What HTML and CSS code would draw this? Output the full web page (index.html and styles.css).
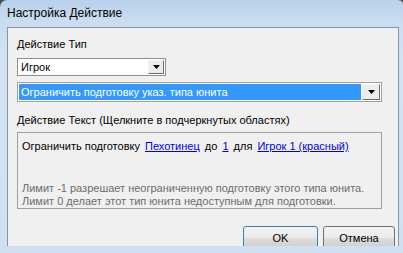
FILE: index.html
```html
<!DOCTYPE html>
<html lang="ru">

<head>
    <meta charset="UTF-8">
    <title>Настройка Действие</title>
    <link rel="stylesheet" href="styles.css">
</head>

<body>
    <div class="window">
        <div class="titlebar">Настройка Действие</div>
        <div class="client">
            <div class="label">Действие Тип</div>
            <div class="combo combo-short">
                <span class="combo-value">Игрок</span>
                <span class="combo-btn"><svg width="7" height="4"><polygon points="0,0 7,0 3.5,4" fill="#000"/></svg></span>
            </div>
            <div class="combo combo-wide">
                <span class="combo-value selected">Ограничить подготовку указ. типа юнита</span>
                <span class="combo-btn"><svg width="7" height="4"><polygon points="0,0 7,0 3.5,4" fill="#000"/></svg></span>
            </div>

            <div class="label label-text">Действие Текст (Щелкните в подчеркнутых областях)</div>
            <div class="textbox">
                <div class="trigger">Ограничить подготовку <a href="#">Пехотинец</a> до <a href="#">1</a> для <a href="#">Игрок 1 (красный)</a></div>
                <div class="hint">
                    Лимит -1 разрешает неограниченную подготовку этого типа юнита.<br>
                    Лимит 0 делает этот тип юнита недоступным для подготовки.
                </div>
            </div>

            <div class="buttons">
                <button class="btn btn-default">OK</button>
                <button class="btn btn-cancel">Отмена</button>
            </div>
        </div>
    </div>
</body>

</html>
```

FILE: styles.css
```css
body {
    margin: 0;
    background-color: #4b4e53;
    font-family: "Liberation Sans", Arial, sans-serif;
    font-size: 11px;
    color: #000;
}

.window {
    width: 392px;
    height: 253px;
    padding: 0 5px 0 7px;
    border-radius: 7px 7px 0 0;
    border-right: 1px solid #6f7f92;
    background: linear-gradient(to bottom, #b9d1ea 0px, #c9dcf0 20px, #d3e3f4 60px, #cfe0f2 253px);
    display: flex;
    flex-direction: column;
    box-sizing: content-box;
}

.titlebar {
    height: 27px;
    line-height: 26px;
    font-size: 12px;
    color: #000;
    flex-shrink: 0;
}

.client {
    height: 219px;
    background-color: #f0f0f0;
    border: 1px solid #8297ad;
    border-bottom: none;
    padding: 9px 0 0 9px;
    box-sizing: border-box;
    overflow: hidden;
    display: flex;
    flex-direction: column;
}

.label {
    height: 14px;
    line-height: 14px;
    margin-right: 11px;
}

.combo {
    height: 18px;
    border: 1px solid #8e8f8f;
    background-color: #fff;
    padding: 1px;
    box-sizing: border-box;
    display: flex;
    align-items: stretch;
}

.combo-short {
    width: 149px;
    margin-top: 7px;
}

.combo-wide {
    width: 365px;
    height: 20px;
    margin-top: 6px;
    border-color: #a0a0a0;
}

.combo-value {
    flex: 1;
    line-height: 14px;
    padding-left: 2px;
    white-space: nowrap;
    overflow: hidden;
}

.combo-value.selected {
    background-color: #3399ff;
    color: #fff;
    line-height: 16px;
}

.combo-btn {
    width: 14px;
    border: 1px solid;
    border-color: #f4f4f4 #6b6b6b #6b6b6b #f4f4f4;
    background-color: #ececec;
    display: flex;
    align-items: center;
    justify-content: center;
}

.combo-wide .combo-btn {
    width: 16px;
    margin-left: 1px;
}

.label-text {
    margin-top: 11px;
}

.textbox {
    width: 365px;
    height: 79px;
    margin-top: 5px;
    border: 1px solid #a0a0a0;
    padding: 6px 0 0 4px;
    box-sizing: border-box;
}

.trigger {
    line-height: 14px;
    white-space: nowrap;
}

.trigger a {
    color: #0000ee;
    text-decoration: underline;
    margin: 0 2px;
}

.hint {
    margin-top: 29px;
    line-height: 13px;
    color: #6d6d6d;
    white-space: nowrap;
}

.buttons {
    margin-top: 17px;
    margin-right: 3px;
    display: flex;
    justify-content: flex-end;
    gap: 5px;
}

.btn {
    height: 23px;
    width: 75px;
    font-family: "Liberation Sans", Arial, sans-serif;
    font-size: 11px;
    color: #000;
    border: 1px solid #707070;
    border-radius: 3px;
    background: linear-gradient(to bottom, #f2f2f2 0%, #ebebeb 50%, #dddddd 51%, #cfcfcf 100%);
    padding: 0;
}

.btn-default {
    border-color: #3c7fb1;
}

.btn-cancel {
    width: 72px;
}
```
